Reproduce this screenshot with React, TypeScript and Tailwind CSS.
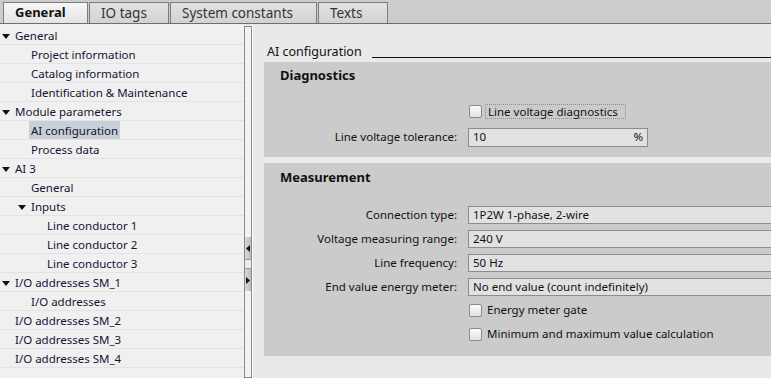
import React from "react";

const Tri = ({ dir = "down" }: { dir?: "down" | "left" | "right" }) => {
  if (dir === "down")
    return (
      <svg width="8" height="5" viewBox="0 0 8 5" className="block">
        <polygon points="0,0 8,0 4,5" fill="#111" />
      </svg>
    );
  if (dir === "left")
    return (
      <svg width="4" height="7" viewBox="0 0 4 7" className="block">
        <polygon points="4,0 4,7 0,3.5" fill="#111" />
      </svg>
    );
  return (
    <svg width="4" height="7" viewBox="0 0 4 7" className="block">
      <polygon points="0,0 0,7 4,3.5" fill="#111" />
    </svg>
  );
};

type Row = { label: string; level: number; arrow?: boolean; selected?: boolean };

const rows: Row[] = [
  { label: "General", level: 0, arrow: true },
  { label: "Project information", level: 1 },
  { label: "Catalog information", level: 1 },
  { label: "Identification & Maintenance", level: 1 },
  { label: "Module parameters", level: 0, arrow: true },
  { label: "AI configuration", level: 1, selected: true },
  { label: "Process data", level: 1 },
  { label: "AI 3", level: 0, arrow: true },
  { label: "General", level: 1 },
  { label: "Inputs", level: 1, arrow: true },
  { label: "Line conductor 1", level: 2 },
  { label: "Line conductor 2", level: 2 },
  { label: "Line conductor 3", level: 2 },
  { label: "I/O addresses SM_1", level: 0, arrow: true },
  { label: "I/O addresses", level: 1 },
  { label: "I/O addresses SM_2", level: 0 },
  { label: "I/O addresses SM_3", level: 0 },
  { label: "I/O addresses SM_4", level: 0 },
];

const Checkbox = () => (
  <div className="w-[13px] h-[13px] rounded-[2px] border border-[#8a8a8a] bg-gradient-to-b from-[#fafafa] to-[#e2e2e2] shrink-0" />
);

const Input = ({ value }: { value: string }) => (
  <div className="h-[18px] w-[320px] bg-[#e1e1e1] border border-[#8c8c8c] flex items-center pl-[4px] text-[11.5px] text-[#111] whitespace-nowrap">
    {value}
  </div>
);

const FieldRow = ({ label, children }: { label: string; children: React.ReactNode }) => (
  <div className="flex items-center h-[18px]">
    <div className="w-[193px] text-right text-[11.5px] text-[#111] whitespace-nowrap">{label}</div>
    <div className="ml-[11px]">{children}</div>
  </div>
);

export default function App() {
  const tabs = [
    { label: "General", w: "w-[85px]", active: true },
    { label: "IO tags", w: "w-[80px]" },
    { label: "System constants", w: "w-[147px]" },
    { label: "Texts", w: "w-[70px]" },
  ];
  return (
    <div
      className="w-[771px] h-[378px] overflow-hidden flex flex-col bg-[#e9e9e9]"
      style={{ fontFamily: '"Noto Sans", "Open Sans", sans-serif' }}
    >
      {/* Tab bar */}
      <div className="h-[24px] shrink-0 bg-[#cccccc] border-b border-[#6e6e6e] flex items-end pl-[3px] gap-[1px]">
        {tabs.map((t) => (
          <div
            key={t.label}
            className={
              "h-[21px] border border-b-0 border-[#7c7c7c] flex items-center pl-[11px] whitespace-nowrap " +
              t.w +
              (t.active
                ? " font-bold text-[13px] bg-gradient-to-b from-[#f7f7f7] to-[#e4e4e4] text-[#111]"
                : " text-[13.5px] bg-gradient-to-b from-[#e2e2e2] to-[#d2d2d2] text-[#333]")
            }
          >
            {t.label}
          </div>
        ))}
      </div>

      <div className="flex flex-1 min-h-0">
        {/* Tree */}
        <div className="w-[244px] shrink-0 bg-[#f0f0f0] pt-[2px]">
          {rows.map((r, i) => (
            <div key={i} className="h-[19px] border-b border-[#e3e3e3] flex items-start relative">
              {r.arrow && (
                <div
                  className={
                    "absolute top-[8px] " +
                    (r.level === 0 ? "left-[2px]" : r.level === 1 ? "left-[18px]" : "left-[34px]")
                  }
                >
                  <Tri />
                </div>
              )}
              <div
                className={
                  "text-[11.5px] text-[#141432] whitespace-nowrap h-[18px] flex items-center px-[2px] pt-[2px] " +
                  (r.level === 0 ? "ml-[13px]" : r.level === 1 ? "ml-[29px]" : "ml-[45px]") +
                  (r.selected ? " bg-[#c7d0d9]" : "")
                }
              >
                {r.label}
              </div>
            </div>
          ))}
        </div>

        {/* Splitter */}
        <div className="w-[8px] shrink-0 pt-[2px] flex">
          <div className="w-[8px] border border-[#8a8a8a] bg-[#f2f2f2] flex flex-col">
            <div className="h-[210px]" />
            <div className="h-[22px] bg-gradient-to-r from-[#d8d8d8] to-[#bdbdbd] flex items-center justify-center">
              <Tri dir="left" />
            </div>
            <div className="h-[10px] border-t border-b border-[#9a9a9a] bg-[#ececec]" />
            <div className="h-[22px] bg-gradient-to-r from-[#d8d8d8] to-[#bdbdbd] flex items-center justify-center">
              <Tri dir="right" />
            </div>
            <div className="flex-1" />
          </div>
        </div>
        <div className="w-[1px] shrink-0 bg-[#ffffff]" />

        {/* Right content */}
        <div className="flex-1 bg-[#e9e9e9] pl-[11px] flex flex-col">
          <div className="h-[38px] shrink-0 flex items-end pb-[2px]">
            <div className="text-[12.5px] text-[#111] whitespace-nowrap pl-[3px] leading-[16px]">AI configuration</div>
            <div className="flex-1 ml-[10px] h-[1px] bg-[#111] mb-[2px]" />
          </div>

          {/* Diagnostics */}
          <div className="h-[95px] bg-[#cbcbcb] flex flex-col">
            <div className="pl-[16px] pt-[5px] text-[13px] font-bold text-[#111] leading-[16px]">Diagnostics</div>
            <div className="h-[21px]" />
            <div className="flex items-center h-[15px] pl-[205px]">
              <Checkbox />
              <div className="ml-[3px] border border-dotted border-[#7f8fb0] h-[15px] w-[141px] flex items-center pl-[2px] text-[11.5px] text-[#111] whitespace-nowrap">
                Line voltage diagnostics
              </div>
            </div>
            <div className="h-[9px]" />
            <FieldRow label="Line voltage tolerance:">
              <div className="h-[19px] w-[180px] bg-[#e1e1e1] border border-[#8c8c8c] flex items-center justify-between px-[4px] text-[11.5px] text-[#111]">
                <span>10</span>
                <span>%</span>
              </div>
            </FieldRow>
          </div>

          <div className="h-[6px]" />

          {/* Measurement */}
          <div className="h-[193px] bg-[#cbcbcb] flex flex-col">
            <div className="pl-[16px] pt-[6px] text-[13px] font-bold text-[#111] leading-[16px]">Measurement</div>
            <div className="h-[21px]" />
            <div className="flex flex-col gap-[6px]">
              <FieldRow label="Connection type:">
                <Input value="1P2W 1-phase, 2-wire" />
              </FieldRow>
              <FieldRow label="Voltage measuring range:">
                <Input value="240 V" />
              </FieldRow>
              <FieldRow label="Line frequency:">
                <Input value="50 Hz" />
              </FieldRow>
              <FieldRow label="End value energy meter:">
                <Input value="No end value (count indefinitely)" />
              </FieldRow>
            </div>
            <div className="h-[7px]" />
            <div className="flex items-center h-[14px] pl-[205px]">
              <Checkbox />
              <div className="ml-[5px] text-[11.5px] text-[#111] whitespace-nowrap">Energy meter gate</div>
            </div>
            <div className="h-[10px]" />
            <div className="flex items-center h-[14px] pl-[205px]">
              <Checkbox />
              <div className="ml-[5px] text-[11.5px] text-[#111] whitespace-nowrap">Minimum and maximum value calculation</div>
            </div>
          </div>
        </div>
      </div>
    </div>
  );
}
